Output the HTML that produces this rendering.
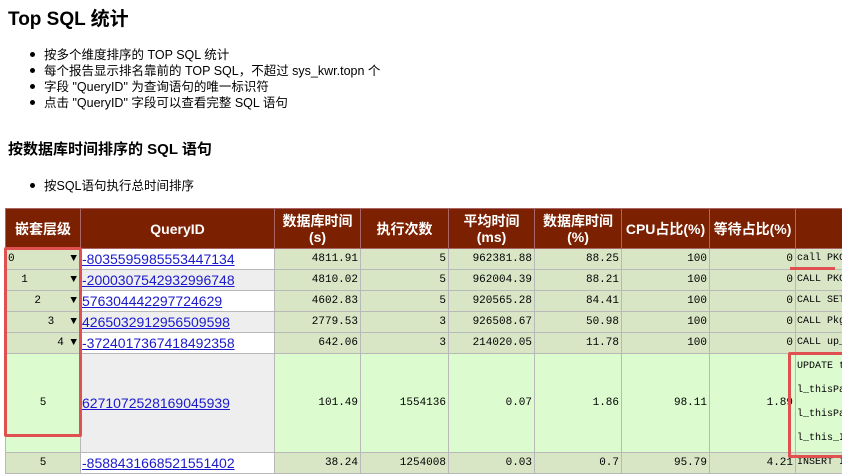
<!DOCTYPE html>
<html><head><meta charset="utf-8"><style>
body{margin:0;width:842px;height:474px;overflow:hidden;background:#fff;font-family:"Liberation Sans","Noto Sans CJK SC",sans-serif;color:#000;position:relative}
h1{position:absolute;left:8px;top:4px;margin:0;font-size:19px;font-weight:bold}
h2{position:absolute;left:8px;top:138px;margin:0;font-size:15px;font-weight:bold}
ul{position:absolute;margin:0;padding:0;list-style:none;font-size:12.5px;line-height:16px}
ul li:before{content:"";display:inline-block;width:5px;height:5px;background:#000;border-radius:50%;margin:0 9px 2px 0;vertical-align:middle}
table{position:absolute;left:5px;top:208px;width:850px;border-collapse:collapse;table-layout:fixed;font-family:"Liberation Mono","Noto Sans CJK SC",monospace;font-size:11px}
th{background:#7b2000;color:#fff;font-family:"Liberation Sans","Noto Sans CJK SC",sans-serif;font-size:14px;font-weight:bold;line-height:16px;border:1px solid #a66;padding:0;height:39px}
td{border:1px solid #b8b8b8;background:#d8e6c6;text-align:right;padding:0 2px;height:20px;line-height:18px;white-space:nowrap;overflow:hidden}
td.q{background:#fff;text-align:left;font-family:"Liberation Sans",sans-serif;font-size:14px;padding:0 1px}
td.q.g{background:#eee}
td.q a{color:#1a1acc;text-decoration:underline}
td.l{text-align:left;padding-right:3px}
td.sq{text-align:left;font-size:10px;padding:0 1px}
tr.big td{background:#dcfcd0;height:98px}
tr.big td.q{background:#eee}
.arr{float:right;font-size:11px}
.box{position:absolute;border:3px solid #e05050;border-radius:2px}
</style></head><body>
<h1>Top SQL 统计</h1>
<ul style="left:30px;top:47px">
<li>按多个维度排序的 TOP SQL 统计</li>
<li>每个报告显示排名靠前的 TOP SQL，不超过 sys_kwr.topn 个</li>
<li>字段 "QueryID" 为查询语句的唯一标识符</li>
<li>点击 "QueryID" 字段可以查看完整 SQL 语句</li>
</ul>
<h2>按数据库时间排序的 SQL 语句</h2>
<ul style="left:30px;top:178px"><li>按SQL语句执行总时间排序</li></ul>
<table>
<colgroup><col style="width:75px"><col style="width:194px"><col style="width:86px"><col style="width:88px"><col style="width:86px"><col style="width:87px"><col style="width:88px"><col style="width:86px"><col style="width:60px"></colgroup>
<tr><th>嵌套层级</th><th>QueryID</th><th>数据库时间<br>(s)</th><th>执行次数</th><th>平均时间<br>(ms)</th><th>数据库时间<br>(%)</th><th>CPU占比(%)</th><th>等待占比(%)</th><th></th></tr>
<tr><td class="l">0<span class="arr">▼</span></td><td class="q"><a>-8035595985553447134</a></td><td>4811.91</td><td>5</td><td>962381.88</td><td>88.25</td><td>100</td><td>0</td><td class="sq">call PKG</td></tr>
<tr><td class="l">&nbsp;&nbsp;1<span class="arr">▼</span></td><td class="q g"><a>-2000307542932996748</a></td><td>4810.02</td><td>5</td><td>962004.39</td><td>88.21</td><td>100</td><td>0</td><td class="sq">CALL PKG</td></tr>
<tr><td class="l">&nbsp;&nbsp;&nbsp;&nbsp;2<span class="arr">▼</span></td><td class="q"><a>576304442297724629</a></td><td>4602.83</td><td>5</td><td>920565.28</td><td>84.41</td><td>100</td><td>0</td><td class="sq">CALL SET</td></tr>
<tr><td class="l">&nbsp;&nbsp;&nbsp;&nbsp;&nbsp;&nbsp;3<span class="arr">▼</span></td><td class="q g"><a>4265032912956509598</a></td><td>2779.53</td><td>3</td><td>926508.67</td><td>50.98</td><td>100</td><td>0</td><td class="sq">CALL Pkg</td></tr>
<tr><td class="l" style="text-align:right">4 ▼</td><td class="q"><a>-3724017367418492358</a></td><td>642.06</td><td>3</td><td>214020.05</td><td>11.78</td><td>100</td><td>0</td><td class="sq">CALL up_</td></tr>
<tr class="big"><td style="text-align:center">5</td><td class="q"><a>6271072528169045939</a></td><td>101.49</td><td>1554136</td><td>0.07</td><td>1.86</td><td>98.11</td><td>1.89</td><td class="sq" style="line-height:24px">UPDATE t<br>l_thisPa<br>l_thisPa<br>l_this_I</td></tr>
<tr><td style="text-align:center">5</td><td class="q"><a>-8588431668521551402</a></td><td>38.24</td><td>1254008</td><td>0.03</td><td>0.7</td><td>95.79</td><td>4.21</td><td class="sq">INSERT I</td></tr>
</table>
<div class="box" style="left:4px;top:247px;width:72px;height:184px"></div>
<div class="box" style="left:788px;top:352px;width:60px;height:100px"></div>
<div style="position:absolute;left:790px;top:267px;width:45px;height:3px;background:#e05050"></div>
</body></html>
